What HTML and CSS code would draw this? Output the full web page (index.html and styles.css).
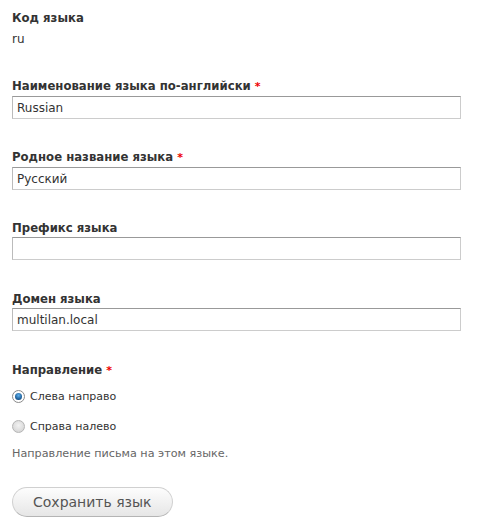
FILE: index.html
```html
<!DOCTYPE html>
<html lang="ru">
<head>
<meta charset="utf-8">
<title>Язык</title>
<link rel="stylesheet" href="styles.css">
</head>
<body>
<form class="form">
  <div class="item item-first">
    <label class="label">Код языка</label>
    <div class="value">ru</div>
  </div>
  <div class="item">
    <label class="label">Наименование языка по-английски <span class="req">*</span></label>
    <input class="text" type="text" value="Russian">
  </div>
  <div class="item">
    <label class="label">Родное название языка <span class="req">*</span></label>
    <input class="text" type="text" value="Русский">
  </div>
  <div class="item">
    <label class="label">Префикс языка</label>
    <input class="text" type="text" value="">
  </div>
  <div class="item item-domain">
    <label class="label">Домен языка</label>
    <input class="text" type="text" value="multilan.local">
  </div>
  <div class="item item-radios">
    <label class="label">Направление <span class="req">*</span></label>
    <div class="radio radio-first"><span class="dot dot-on"></span><span>Слева направо</span></div>
    <div class="radio"><span class="dot"></span><span>Справа налево</span></div>
    <div class="desc">Направление письма на этом языке.</div>
  </div>
  <div class="actions">
    <button class="button" type="button">Сохранить язык</button>
  </div>
</form>
</body>
</html>
```
FILE: styles.css
```css
html, body {
  margin: 0;
  padding: 0;
  background: #fff;
}
body {
  font-family: "DejaVu Sans", Verdana, sans-serif;
  color: #333;
  font-size: 12px;
}
.form {
  padding: 10px 12px 0 12px;
  width: 450px;
}
.item {
  display: flex;
  flex-direction: column;
  align-items: flex-start;
  margin-bottom: 30px;
}
.item-domain {
  padding-top: 1px;
}
.item-radios {
  padding-top: 1px;
}
.label {
  font-weight: bold;
  font-size: 11.7px;
  color: #333;
  line-height: 16px;
  margin-bottom: 1px;
}
.req {
  color: #e00;
  font-size: 11px;
}
.value {
  font-size: 12px;
  line-height: 18px;
  margin-top: 3px;
}
.text {
  box-sizing: border-box;
  width: 449px;
  height: 23px;
  margin: 0;
  padding: 2px 4px;
  font-family: "DejaVu Sans", Verdana, sans-serif;
  font-size: 12px;
  color: #333;
  border: 1px solid #ccc;
  border-top-color: #999;
  border-left-color: #bbb;
  background: #fff;
  outline: none;
}
.radio {
  display: flex;
  align-items: center;
  gap: 5px;
  font-size: 11px;
  height: 18px;
  margin-top: 12px;
}
.radio-first {
  margin-top: 7px;
}
.dot {
  width: 13px;
  height: 13px;
  border-radius: 50%;
  border: 1px solid #b5b5b5;
  background: radial-gradient(circle at 50% 40%, #f2f2f2, #cfcfcf);
  box-sizing: border-box;
  display: flex;
  align-items: center;
  justify-content: center;
  flex: none;
}
.dot-on {
  border-color: #8a8a8a;
  background: #fff;
}
.dot-on::after {
  content: "";
  width: 7px;
  height: 7px;
  border-radius: 50%;
  background: radial-gradient(circle at 50% 35%, #5fb0ee, #0d4a82 80%);
}
.desc {
  color: #666;
  font-size: 11.2px;
  line-height: 16px;
  margin-top: 11px;
}
.actions {
  margin-top: -5px;
}
.button {
  font-family: "DejaVu Sans", Verdana, sans-serif;
  font-size: 14px;
  color: #555;
  height: 30px;
  padding: 0 20px;
  border: 1px solid #d0d0d0;
  border-bottom-color: #b4b4b4;
  border-radius: 15px;
  background: linear-gradient(#fdfdfd, #e6e6e6);
}
```
